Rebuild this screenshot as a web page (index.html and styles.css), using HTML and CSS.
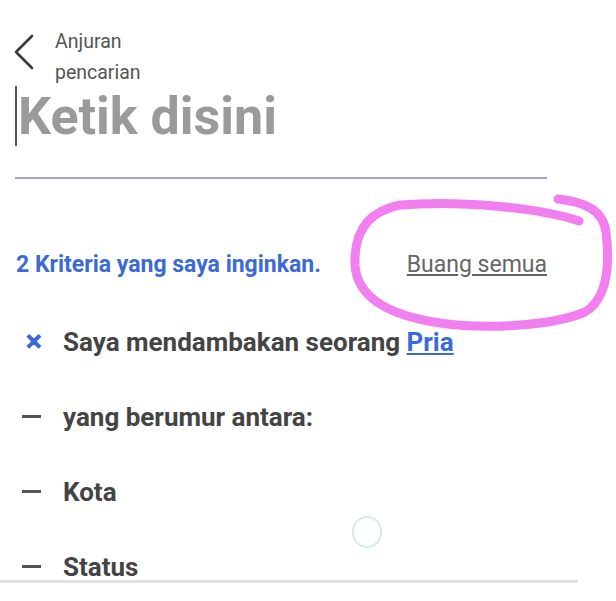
FILE: index.html
```html
<!DOCTYPE html>
<html lang="id">
<head>
  <meta charset="UTF-8">
  <meta name="viewport" content="width=device-width, initial-scale=1.0">
  <title>Anjuran pencarian</title>
  <link rel="stylesheet" href="styles.css">
</head>
<body>

  <div class="layar">
    <header class="atas">
      <svg class="kembali" width="22" height="36" viewBox="0 0 22 36">
        <path d="M19 2 L3 18 L19 34" fill="none" stroke="#3a3a3a" stroke-width="2.6" stroke-linecap="round" stroke-linejoin="round"/>
      </svg>
      <div class="judul-kecil">Anjuran<br>pencarian</div>
    </header>

    <div class="cari">
      <div class="cari-isi">Ketik disini</div>
    </div>
    <div class="garis"></div>

    <div class="kriteria">
      <span class="kriteria-jumlah">2 Kriteria yang saya inginkan.</span>
      <a href="#" class="buang">Buang semua</a>
    </div>

    <ul class="daftar">
      <li><span class="ikon ikon-x">&#x2715;</span><span>Saya mendambakan seorang <a href="#">Pria</a></span></li>
      <li><span class="ikon ikon-min"></span><span>yang berumur antara:</span></li>
      <li><span class="ikon ikon-min"></span><span>Kota</span></li>
      <li><span class="ikon ikon-min"></span><span>Status</span></li>
    </ul>

    <div class="muat"></div>

    <svg class="coretan" width="276" height="145" viewBox="0 0 276 145">
      <path d="M239 31 C200 18, 120 10, 60 15 C25 22, 14 45, 15 75 C17 105, 45 125, 100 133 C150 140, 215 135, 245 122 C268 108, 270 75, 266 42 C263 20, 245 12, 218 9" fill="none" stroke="#f27ff0" stroke-width="9" stroke-linecap="round"/>
    </svg>
  </div>

  <div class="bawah"></div>

</body>
</html>
```

FILE: styles.css
```css
body {
  font-family: Roboto, "Noto Sans", sans-serif;
  background: #fff;
  margin: 0;
  padding: 0;
}

.layar {
  position: relative;
  height: 580px;
  overflow: hidden;
}

.atas {
  display: flex;
  align-items: flex-start;
  gap: 20px;
  padding: 26px 0 0 13px;
}

.kembali {
  margin-top: 8px;
}

.judul-kecil {
  font-size: 19.5px;
  line-height: 31px;
  color: #555;
}

.cari {
  margin: -2px 0 0 15px;
  border-left: 2px solid #555;
  height: 60px;
  display: flex;
  align-items: center;
}

.cari-isi {
  font-size: 52px;
  font-weight: bold;
  color: #9a9a9a;
  padding-left: 1px;
}

.garis {
  margin: 31px 69px 0 15px;
  height: 2px;
  background: #a8a8c4;
}

.kriteria {
  display: flex;
  justify-content: space-between;
  align-items: center;
  margin: 72px 69px 0 16px;
  font-size: 23px;
}

.kriteria-jumlah {
  color: #3b6ad6;
  font-weight: bold;
}

.buang {
  color: #666;
  text-decoration: underline;
}

.daftar {
  list-style: none;
  margin: 26px 0 0;
  padding: 0 0 0 22px;
}

.daftar li {
  display: flex;
  align-items: center;
  height: 75px;
  font-size: 26px;
  font-weight: bold;
  color: #444;
}

.daftar li a {
  color: #3b6ad6;
}

.ikon {
  width: 41px;
  flex-shrink: 0;
}

.ikon-x {
  color: #3b6ad6;
  font-size: 21px;
  padding-left: 3px;
  width: 38px;
  -webkit-text-stroke: 1px #3b6ad6;
}

.ikon-min::before {
  content: "";
  display: block;
  width: 19px;
  height: 3px;
  background: #555;
}

.muat {
  position: absolute;
  left: 352px;
  top: 516px;
  width: 26px;
  height: 28px;
  border: 2px solid #d6e8f2;
  border-radius: 50%;
}

.coretan {
  position: absolute;
  left: 340px;
  top: 190px;
  width: 276px;
  height: 145px;
}

.bawah {
  width: 578px;
  height: 3px;
  background: #e0e0e0;
}
```
